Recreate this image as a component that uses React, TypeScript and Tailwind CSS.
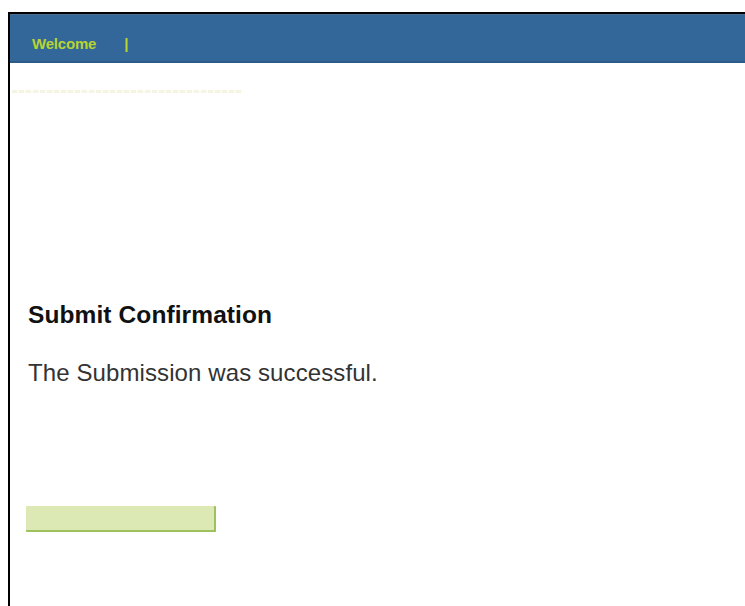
export default function App() {
  return (
    <div className="w-[745px] h-[606px] bg-white pt-[12px] pl-[8px] overflow-hidden font-['Liberation_Sans',Arial,sans-serif]">
      <div className="h-[594px] border-l-2 border-t-2 border-black flex flex-col">
        {/* top navigation bar */}
        <div className="h-[49px] bg-[#336699] border-t border-[#4a6f95] border-b-2 border-b-[#2c5b8a] flex items-start pt-[21px] pl-[22px] gap-[28px]">
          <span className="text-[15px] leading-none font-bold text-[#b8d430] tracking-[-0.2px]">Welcome</span>
          <span className="text-[15px] leading-none font-bold text-[#b8d430]">|</span>
        </div>

        {/* faint breadcrumb row */}
        <div className="mt-[27px] ml-[2px] h-[3px] w-[230px] bg-[repeating-linear-gradient(90deg,#f3f5e2_0px,#f3f5e2_5px,#fdfdf6_5px,#fdfdf6_7px)]" />

        <div className="pl-[18px] pt-[210px]">
          <h2 className="text-[24.5px] font-bold text-[#111] leading-none tracking-[0.1px]">Submit Confirmation</h2>
          <p className="mt-[33px] text-[24px] text-[#333] leading-none tracking-[0.1px]">
            The Submission was successful.
          </p>
          <button className="mt-[121px] -ml-[2px] block w-[190px] h-[26px] bg-[#dde9b4] border-b-2 border-r-2 border-[#9dc25d] rounded-[1px]" />
        </div>
      </div>
    </div>
  );
}
